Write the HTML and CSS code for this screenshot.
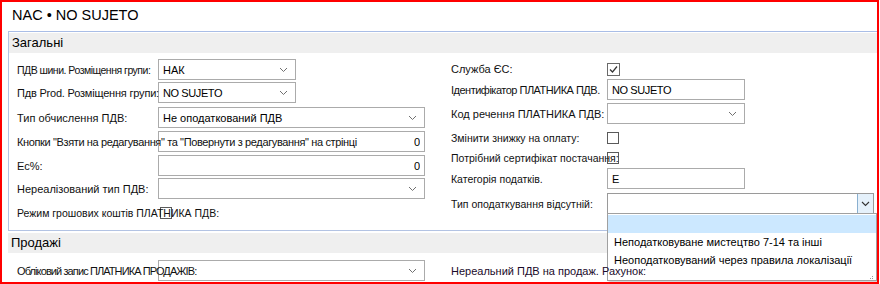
FILE: index.html
```html
<!DOCTYPE html>
<html lang="uk">
<head>
    <meta charset="UTF-8">
    <title>NAC • NO SUJETO</title>
    <link rel="stylesheet" href="styles.css">
</head>
<body>
    <div class="frame">
        <div class="title">NAC • NO SUJETO</div>

        <section class="group general">
            <div class="group-head">Загальні</div>
            <div class="group-body">
                <div class="col left">
                    <div class="row r1">
                        <span class="lbl sm tight">ПДВ шини. Розміщення групи:</span>
                        <div class="field select short"><span class="val">НАК</span><i class="chev"></i></div>
                    </div>
                    <div class="row r2">
                        <span class="lbl snug">Пдв Prod. Розміщення групи:</span>
                        <div class="field select short"><span class="val cond">NO SUJETO</span><i class="chev"></i></div>
                    </div>
                    <div class="row r3">
                        <span class="lbl">Тип обчислення ПДВ:</span>
                        <div class="field select wide"><span class="val">Не оподаткований ПДВ</span><i class="chev"></i></div>
                    </div>
                    <div class="row r4">
                        <span class="lbl long">Кнопки "Взяти на редагування" та "Повернути з редагування" на стрінці</span>
                        <div class="field wide num"><span class="val">0</span></div>
                    </div>
                    <div class="row r5">
                        <span class="lbl">Ec%:</span>
                        <div class="field wide num"><span class="val">0</span></div>
                    </div>
                    <div class="row r6">
                        <span class="lbl">Нереалізований тип ПДВ:</span>
                        <div class="field select wide"><span class="val"></span><i class="chev"></i></div>
                    </div>
                    <div class="row r7 check-row">
                        <span class="lbl sm">Режим грошових коштів ПЛАТНИКА ПДВ:</span>
                        <span class="box"></span>
                    </div>
                </div>

                <div class="col right">
                    <div class="row c1 check-row">
                        <span class="lbl">Служба ЄС:</span>
                        <span class="box checked">
                            <svg width="11" height="11" viewBox="0 0 11 11"><polyline points="2,5.5 4.5,8 9,2.5" fill="none" stroke="#333" stroke-width="1.2"/></svg>
                        </span>
                    </div>
                    <div class="row c2">
                        <span class="lbl tight">Ідентифікатор ПЛАТНИКА ПДВ.</span>
                        <div class="field mid"><span class="val cond">NO SUJETO</span></div>
                    </div>
                    <div class="row c3">
                        <span class="lbl">Код речення ПЛАТНИКА ПДВ:</span>
                        <div class="field select mid"><span class="val"></span><i class="chev"></i></div>
                    </div>
                    <div class="row c4 check-row">
                        <span class="lbl sm">Змінити знижку на оплату:</span>
                        <span class="box"></span>
                    </div>
                    <div class="row c5 check-row">
                        <span class="lbl sm">Потрібний сертифікат постачання:</span>
                        <span class="box"></span>
                    </div>
                    <div class="row c6">
                        <span class="lbl sm">Категорія податків.</span>
                        <div class="field mid"><span class="val">E</span></div>
                    </div>
                    <div class="row c7">
                        <span class="lbl sm">Тип оподаткування відсутній:</span>
                        <div class="field select full focused">
                            <span class="val"></span><i class="chev btn"></i>
                            <ul class="dropdown">
                                <li class="hl"></li>
                                <li>Неподатковуване мистецтво 7-14 та інші</li>
                                <li>Неоподатковуваний через правила локалізації</li>
                                <li class="grip"></li>
                            </ul>
                        </div>
                    </div>
                </div>
            </div>
        </section>

        <section class="group sales">
            <div class="group-head">Продажі</div>
            <div class="group-body">
                <div class="col left">
                    <div class="row">
                        <span class="lbl squeeze">Обліковий запис ПЛАТНИКА ПРОДАЖІВ:</span>
                        <div class="field select wide"><span class="val"></span><i class="chev"></i></div>
                    </div>
                </div>
                <div class="col right">
                    <div class="row">
                        <span class="lbl top">Нереальний ПДВ на продаж. Рахунок:</span>
                    </div>
                </div>
            </div>
        </section>
    </div>
</body>
</html>
```

FILE: styles.css
```css
* {
    box-sizing: border-box;
}

body {
    margin: 0;
    background: #fff;
    font-family: "Liberation Sans", Arial, sans-serif;
    color: #111;
}

.frame {
    width: 879px;
    height: 284px;
    border: 2px solid #f00;
    overflow: hidden;
}

.title {
    height: 29px;
    line-height: 27px;
    padding-left: 10px;
    font-size: 14.5px;
    color: #000;
}

.group {
    margin-left: 6px;
    border-left: 1px solid #b3c3e3;
    padding-top: 1px;
}

.general {
    border-top: 1px solid #a9bde6;
    border-bottom: 1px solid #b3c3e3;
}

.sales {
    margin-top: 2px;
    border-left: none;
    padding-top: 0;
}

.group-head {
    height: 20px;
    line-height: 20px;
    padding-left: 3px;
    background: #efefef;
    font-size: 13px;
    color: #000;
}

.general .group-body {
    padding: 6px 0 10px 8px;
}

.sales .group-body {
    padding: 7px 0 0 9px;
}

.group-body {
    display: grid;
    grid-template-columns: 434px 1fr;
}

.col {
    display: flex;
    flex-direction: column;
}

.row {
    display: flex;
    align-items: center;
    height: 21px;
}

.check-row {
    height: 20px;
}

.lbl {
    flex: none;
    white-space: nowrap;
    font-size: 11px;
    position: relative;
    z-index: 2;
}

.left .lbl {
    width: 141px;
}

.right .lbl {
    width: 156px;
}

.lbl.sm {
    font-size: 10.5px;
}

.lbl.tight {
    letter-spacing: -0.5px;
}

.lbl.snug {
    letter-spacing: -0.2px;
}

.lbl.long {
    letter-spacing: -0.37px;
}

.lbl.squeeze {
    letter-spacing: -0.9px;
}

.lbl.top {
    z-index: 20;
    color: #1a0a2a;
}

/* vertical spacing, left column */
.r2 { margin-top: 2px; }
.r3 { margin-top: 4px; }
.r4 { margin-top: 3px; }
.r5 { margin-top: 3px; }
.r6 { margin-top: 2px; }
.r7 { margin-top: 7px; height: 14px; }

/* vertical spacing, right column */
.c1 { height: 20px; }
.c3 { margin-top: 3px; }
.c4 { margin-top: 4px; }
.c6 { height: 21px; }
.c7 { margin-top: 4px; }

.field {
    flex: none;
    position: relative;
    height: 100%;
    border: 1px solid #ababab;
    background: #fff;
    display: flex;
    align-items: center;
    padding: 0 4px;
    font-size: 11px;
    color: #000;
}

.short { width: 138px; }
.wide { width: 267px; }
.mid { width: 138px; }
.full { width: 267px; }

.num {
    justify-content: flex-end;
}

.field .val {
    flex: 1;
    white-space: nowrap;
    overflow: hidden;
}

.field .val.cond {
    letter-spacing: -0.4px;
}

.num .val {
    flex: none;
}

.chev {
    flex: none;
    width: 9px;
    height: 9px;
    margin-right: 3px;
    background: url("data:image/svg+xml;utf8,<svg xmlns='http://www.w3.org/2000/svg' width='9' height='9'><polyline points='1,3 4.5,6.5 8,3' fill='none' stroke='%23707070' stroke-width='1'/></svg>") no-repeat center;
}

.focused {
    border-color: #9a9a9a;
    padding-right: 0;
}

.chev.btn {
    width: 16px;
    height: 19px;
    margin-right: 0;
    background-color: #e5f1fb;
    border-left: 1px solid #8ab0d0;
    background-image: url("data:image/svg+xml;utf8,<svg xmlns='http://www.w3.org/2000/svg' width='9' height='9'><polyline points='1,3 4.5,6.5 8,3' fill='none' stroke='%23333' stroke-width='1.1'/></svg>");
}

.box {
    flex: none;
    width: 12px;
    height: 12px;
    border: 1px solid #5a5a5a;
    background: #fff;
    position: relative;
    z-index: 1;
}

.left .box {
    margin-left: 2px;
}

.box.checked {
    height: 13px;
    width: 13px;
    border-color: #6a6a6a;
}

.box svg {
    display: block;
}

.dropdown {
    position: absolute;
    top: 100%;
    left: -1px;
    width: 270px;
    height: 68px;
    margin: 0;
    padding: 1px 0 0;
    list-style: none;
    background: #fff;
    border: 1px solid #a0a0a0;
    box-shadow: 2px 2px 2px rgba(0, 0, 0, 0.18);
    z-index: 10;
}

.dropdown li {
    height: 18px;
    line-height: 18px;
    padding-left: 6px;
    font-size: 11px;
    color: #000;
    white-space: nowrap;
}

.dropdown li.hl {
    background: #cce8ff;
}

.dropdown li.grip {
    height: 12px;
    background: url("data:image/svg+xml;utf8,<svg xmlns='http://www.w3.org/2000/svg' width='6' height='6'><rect x='4' y='4' width='1' height='1' fill='%23999'/><rect x='2' y='4' width='1' height='1' fill='%23999'/><rect x='4' y='2' width='1' height='1' fill='%23999'/></svg>") no-repeat right 2px bottom 1px;
}
```
